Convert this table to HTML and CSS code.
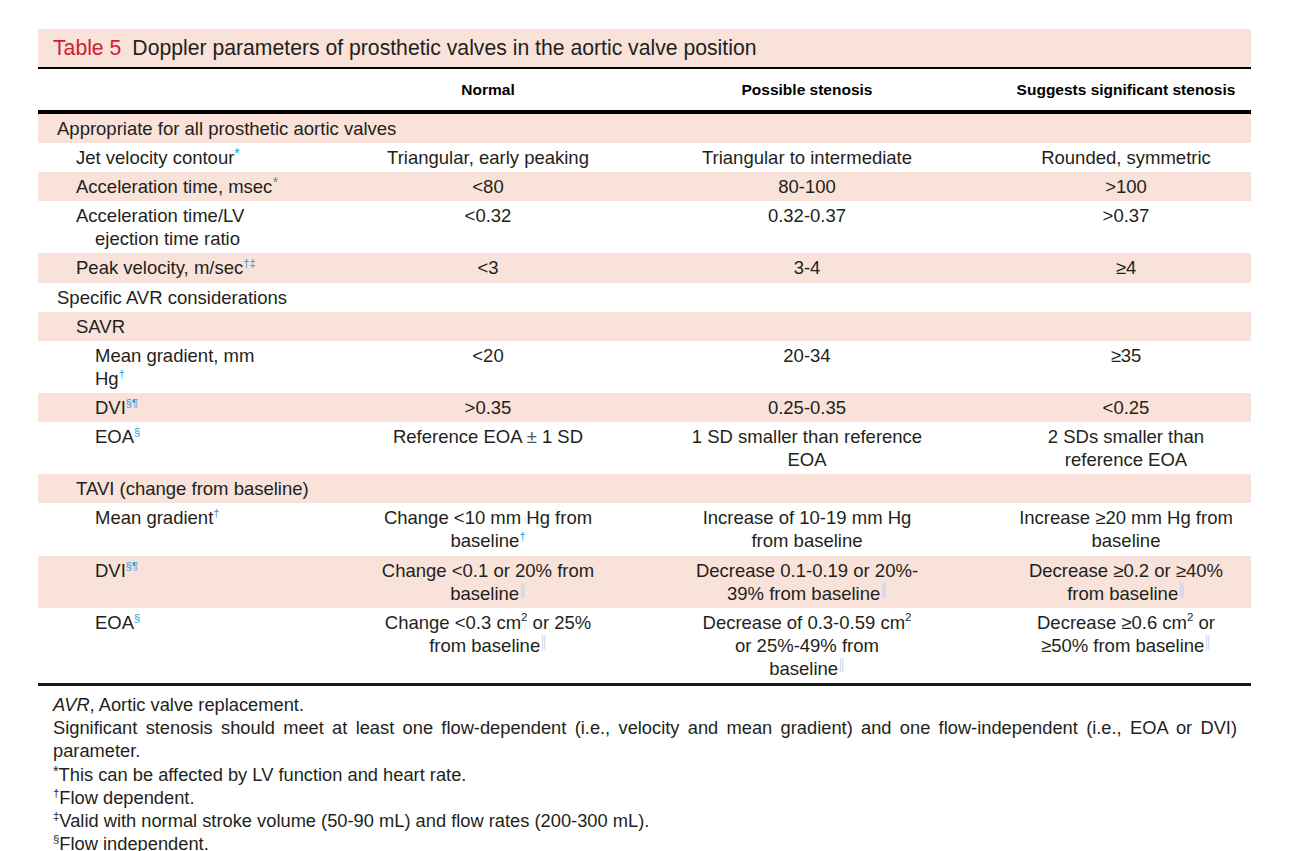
FILE: index.html
```html
<!DOCTYPE html>
<html lang="en">
<head>
<meta charset="utf-8">
<title>Table 5</title>
<link rel="stylesheet" href="styles.css">
</head>
<body>
<div class="page">
  <div class="title"><span class="tnum">Table 5</span><span class="ttext">Doppler parameters of prosthetic valves in the aortic valve position</span></div>
  <div class="table">
    <div class="row head">
      <div class="lab"></div>
      <div class="c">Normal</div>
      <div class="c">Possible stenosis</div>
      <div class="c c4">Suggests significant stenosis</div>
    </div>

    <div class="row pink"><div class="full l0">Appropriate for all prosthetic aortic valves</div></div>

    <div class="row">
      <div class="lab l1">Jet velocity contour<sup class="m ast">*</sup></div>
      <div class="c">Triangular, early peaking</div>
      <div class="c">Triangular to intermediate</div>
      <div class="c c4">Rounded, symmetric</div>
    </div>

    <div class="row pink">
      <div class="lab l1">Acceleration time, msec<sup class="m ast">*</sup></div>
      <div class="c">&lt;80</div>
      <div class="c">80-100</div>
      <div class="c c4">&gt;100</div>
    </div>

    <div class="row">
      <div class="lab hang">Acceleration time/LV<br>ejection time ratio</div>
      <div class="c">&lt;0.32</div>
      <div class="c">0.32-0.37</div>
      <div class="c c4">&gt;0.37</div>
    </div>

    <div class="row pink">
      <div class="lab l1">Peak velocity, m/sec<sup class="m">†‡</sup></div>
      <div class="c">&lt;3</div>
      <div class="c">3-4</div>
      <div class="c c4">≥4</div>
    </div>

    <div class="row"><div class="full l0">Specific AVR considerations</div></div>

    <div class="row pink"><div class="full l1">SAVR</div></div>

    <div class="row">
      <div class="lab l2">Mean gradient, mm<br>Hg<sup class="m">†</sup></div>
      <div class="c">&lt;20</div>
      <div class="c">20-34</div>
      <div class="c c4">≥35</div>
    </div>

    <div class="row pink">
      <div class="lab l2">DVI<sup class="m">§¶</sup></div>
      <div class="c">&gt;0.35</div>
      <div class="c">0.25-0.35</div>
      <div class="c c4">&lt;0.25</div>
    </div>

    <div class="row">
      <div class="lab l2">EOA<sup class="m">§</sup></div>
      <div class="c">Reference EOA <span class="pm">±</span> 1 SD</div>
      <div class="c">1 SD smaller than reference<br>EOA</div>
      <div class="c c4">2 SDs smaller than<br>reference EOA</div>
    </div>

    <div class="row pink"><div class="full l1">TAVI (change from baseline)</div></div>

    <div class="row">
      <div class="lab l2">Mean gradient<sup class="m">†</sup></div>
      <div class="c">Change &lt;10 mm Hg from<br>baseline<sup class="m">†</sup></div>
      <div class="c">Increase of 10-19 mm Hg<br>from baseline</div>
      <div class="c c4">Increase ≥20 mm Hg from<br>baseline</div>
    </div>

    <div class="row pink">
      <div class="lab l2">DVI<sup class="m">§¶</sup></div>
      <div class="c">Change &lt;0.1 or 20% from<br>baseline<sup class="dbl">‖</sup></div>
      <div class="c">Decrease 0.1-0.19 or 20%-<br>39% from baseline<sup class="dbl">‖</sup></div>
      <div class="c c4">Decrease ≥0.2 or ≥40%<br>from baseline<sup class="dbl">‖</sup></div>
    </div>

    <div class="row last">
      <div class="lab l2">EOA<sup class="m">§</sup></div>
      <div class="c">Change &lt;0.3 cm<sup class="n">2</sup> or 25%<br>from baseline<sup class="dbl">‖</sup></div>
      <div class="c">Decrease of 0.3-0.59 cm<sup class="n">2</sup><br>or 25%-49% from<br>baseline<sup class="dbl">‖</sup></div>
      <div class="c c4">Decrease ≥0.6 cm<sup class="n">2</sup> or<br>≥50% from baseline<sup class="dbl">‖</sup></div>
    </div>
  </div>

  <div class="notes">
    <div><i>AVR</i>, Aortic valve replacement.</div>
    <div class="just">Significant stenosis should meet at least one flow-dependent (i.e., velocity and mean gradient) and one flow-independent (i.e., EOA or DVI) parameter.</div>
    <div><sup class="fn ast">*</sup>This can be affected by LV function and heart rate.</div>
    <div><sup class="fn">†</sup>Flow dependent.</div>
    <div><sup class="fn">‡</sup>Valid with normal stroke volume (50-90 mL) and flow rates (200-300 mL).</div>
    <div><sup class="fn">§</sup>Flow independent.</div>
  </div>
</div>
</body>
</html>
```

FILE: styles.css
```css
html, body {
  margin: 0;
  padding: 0;
  background: #ffffff;
}

body {
  font-family: "Liberation Sans", Arial, sans-serif;
  color: #231f20;
}

.page {
  width: 1213px;
  margin-left: 38px;
  padding-top: 29px;
}

.title {
  height: 38px;
  background: #f8e2d9;
  display: flex;
  align-items: center;
  padding-left: 15px;
  font-size: 21.2px;
  white-space: nowrap;
}

.tnum {
  color: #d2202f;
  margin-right: 11px;
}

.ttext {
  color: #231f20;
}

.table {
  font-size: 18.5px;
  line-height: 23.1px;
}

.row {
  display: grid;
  grid-template-columns: 290px 320px 318px 285px;
}

.row.pink {
  background: #f8e2d9;
}

.row.head {
  border-top: 2px solid #000;
  border-bottom: 4px solid #000;
  height: 41px;
  align-items: center;
  font-weight: bold;
  font-size: 15.5px;
  color: #000;
}

.row.head .c {
  padding-top: 0;
  padding-bottom: 0;
}

.row.last {
  border-bottom: 3px solid #1a1a1a;
}

.full {
  grid-column: 1 / -1;
  padding-top: 3px;
  padding-bottom: 3px;
}

.lab {
  padding-top: 3px;
  padding-bottom: 3px;
}

.c {
  text-align: center;
  padding: 3px 0;
  white-space: nowrap;
}

.c.c4 {
  padding-left: 35px;
}

.l0 { padding-left: 19px; }
.l1 { padding-left: 38px; }
.l2 { padding-left: 57px; }

.hang {
  padding-left: 57px;
  text-indent: -19px;
}

sup {
  line-height: 0;
}

.m {
  color: #1c9fd9;
  font-size: 0.6em;
  vertical-align: 0.65em;
}

.m.ast {
  font-size: 0.78em;
  vertical-align: 0.4em;
}

.dbl {
  color: #9ccbea;
  font-size: 0.72em;
  vertical-align: 0.45em;
  font-family: "DejaVu Sans", sans-serif;
  font-weight: 200;
}

.n {
  font-size: 0.62em;
  vertical-align: 0.7em;
}

.pm {
  color: #555;
}

.notes {
  padding: 7px 14px 0 15px;
  font-size: 18.3px;
  line-height: 23.2px;
}

.just {
  text-align: justify;
}

.fn {
  font-size: 0.62em;
  vertical-align: 0.6em;
}

.fn.ast {
  font-size: 0.78em;
  vertical-align: 0.35em;
}
```
